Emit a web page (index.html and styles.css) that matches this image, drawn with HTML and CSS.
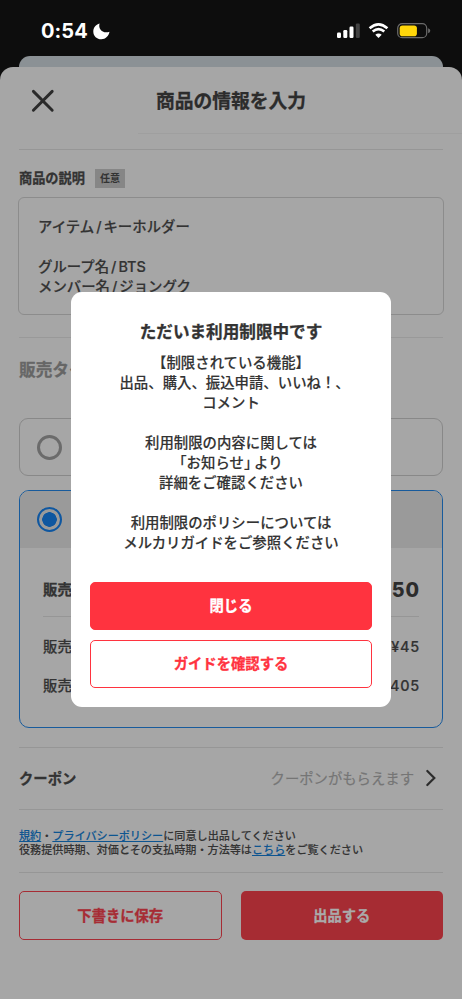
FILE: index.html
```html
<!DOCTYPE html>
<html lang="ja">
<head>
<meta charset="utf-8">
<title>商品の情報を入力</title>
<link rel="stylesheet" href="styles.css">
</head>
<body>
<div class="status">
  <div class="clock"><span>0:54</span>
    <svg width="17" height="17" viewBox="0 0 17 17"><path d="M6.600.5C4.900 5.500 9.500 11.200 16.500 8.800C15.800 13 12.500 16.300 8.400 16.300C3.900 16.300.3 12.900.3 8.400C.3 4.700 2.700 1.600 6.600.5Z" fill="#fff"/></svg>
  </div>
  <svg class="signals" width="96" height="18" viewBox="0 0 96 18">
    <g fill="#fff"><rect x="2" y="10.500" width="4" height="5.500" rx="1.200"/><rect x="8.300" y="8" width="4" height="8" rx="1.200"/><rect x="14.500" y="4.500" width="4" height="11.500" rx="1.200"/></g>
    <rect x="20.800" y="1.500" width="4" height="14.500" rx="1.200" fill="#424242"/>
    <g fill="none" stroke="#fff" stroke-width="2.600"><path d="M34.600 6.200Q43.500 -1.600 52.400 6.200"/><path d="M37.700 9.600Q43.500 4.700 49.300 9.600"/></g>
    <path d="M40.300 12.700Q43.500 10.300 46.700 12.700L43.500 15.900Z" fill="#fff"/>
    <rect x="62.700" y="1.700" width="29" height="14" rx="4.500" fill="none" stroke="#6b6b6b" stroke-width="1.200"/>
    <rect x="64.700" y="3.400" width="17.200" height="10.800" rx="2.800" fill="#ffd60a"/>
    <path d="M93.100 6.200Q95.300 7 95.300 8.700Q95.300 10.400 93.100 11.200Z" fill="#6b6b6b"/>
  </svg>
</div>
<div class="back-sheet"></div>
<main class="sheet">
  <header class="top">
    <svg class="close" width="24" height="24" viewBox="0 0 24 24"><path d="M2.400 2.400L21.200 21.200M21.200 2.400L2.400 21.200" stroke="#2a2a2a" stroke-width="2.900" stroke-linecap="round"/></svg>
    <h1>商品の情報を入力</h1>
  </header>
  <div class="content">
    <section class="description">
      <div class="label"><b>商品の説明</b><span class="tag">任意</span></div>
      <div class="textbox">アイテム<i>/</i>キーホルダー<br><br>グループ名<i>/</i>BTS<br>メンバー名<i>/</i>ジョングク</div>
    </section>
    <section class="type">
      <h2>販売タイプ</h2>
      <div class="option"><span class="radio"></span></div>
      <div class="option-on">
        <div class="option-head"><span class="radio on"></span></div>
        <div class="price"><b>販売価格</b><strong>¥450</strong></div>
        <div class="row"><span>販売手数料</span><span>¥45</span></div>
        <div class="row"><span>販売利益</span><span>¥405</span></div>
      </div>
    </section>
    <section class="coupon"><b>クーポン</b><span>クーポンがもらえます</span>
      <svg width="12" height="18" viewBox="0 0 12 18"><path d="M2.300 2L9.300 9L2.300 16" fill="none" stroke="#2c2c2c" stroke-width="2.200" stroke-linecap="round"/></svg>
    </section>
    <section class="terms"><a>規約</a>・<a>プライバシーポリシー</a>に同意し出品してください<br>役務提供時期、対価とその支払時期・方法等は<a>こちら</a>をご覧ください</section>
    <section class="actions"><div class="btn outline">下書きに保存</div><div class="btn solid">出品する</div></section>
  </div>
</main>
<div class="modal">
  <h3>ただいま利用制限中です</h3>
  <p>【制限されている機能】<br>出品、購入、振込申請、いいね！<span class="half">、</span><br>コメント<br><br>利用制限の内容に関しては<br><span class="half">「</span>お知らせ<span class="half shut">」</span>より<br>詳細をご確認ください<br><br>利用制限のポリシーについては<br>メルカリガイドをご参照ください</p>
  <div class="modal-btn filled">閉じる</div>
  <div class="modal-btn">ガイドを確認する</div>
</div>
</body>
</html>
```
FILE: styles.css
```css
* { box-sizing: border-box; }
body {
  margin: 0; width: 462px; height: 999px; overflow: hidden; position: relative;
  background: #0d0d0d; color: #333;
  font-family: Inter, "Noto Sans CJK JP", sans-serif;
  display: flex; flex-direction: column;
}
h1, h2, h3, p { margin: 0; }
h1, h2, h3, b, .btn, .modal-btn { font-family: "Noto Sans CJK JP", sans-serif; -webkit-text-stroke: .3px; }
svg { flex: none; display: block; }
.status { height: 56px; flex: none; display: flex; justify-content: space-between; padding: 22px 31px 0 41px; }
.clock { display: flex; gap: 5px; height: 18px; align-items: center; color: #fff; font-weight: 700; font-size: 20px; letter-spacing: .1px; }
.back-sheet { height: 24px; flex: none; margin: 0 19px -12px; background: #8b9195; border-radius: 11px 11px 0 0; }
.sheet { flex: 1; background: #a6a6a6; border-radius: 13px 13px 0 0; margin-top: -1px; position: relative; }
.top { height: 67px; display: grid; grid-template-columns: 88px 1fr 88px; align-items: center; background: linear-gradient(#9f9f9f, #9f9f9f) 138px 100% / 324px 1px no-repeat; }
.close { margin-left: 31px; }
h1 { font-size: 18.8px; line-height: 24px; padding-bottom: 2px; text-align: center; color: #2c2c2c; white-space: nowrap; }
.content { padding: 0 19px; }
.description { margin-top: 15px; border-top: 1px solid #969696; height: 188px; padding-top: 18px; }
.label { height: 20px; display: flex; align-items: center; gap: 10px; font-size: 13.2px; line-height: 20px; }
.tag { width: 30px; height: 19px; background: #868686; text-align: center; font-size: 10px; line-height: 18px; font-weight: 700; }
.textbox { height: 118px; margin: 9px -1px 0; border: 1.5px solid #8c8c8c; border-radius: 6px; padding: 19px 19px 0; font-size: 14.4px; line-height: 20px; font-weight: 500; -webkit-text-stroke: .2px; }
.textbox i { font-style: normal; padding: 0 2px; }
.type { border-top: 1px solid #999; height: 410px; }
h2 { font-size: 16.7px; line-height: 24px; margin-top: 19px; color: #666; }
.option { height: 58px; margin-top: 37px; border: 1px solid #888; border-radius: 9px; padding: 16px 17px; }
.radio { display: block; width: 25px; height: 25px; border: 3.500px solid #6b6b6b; border-radius: 50%; }
.radio.on { border: 2px solid #0f57a0; background: radial-gradient(circle, #0f57a0 0 7px, transparent 7.500px); }
.option-on { height: 238px; margin-top: 14px; border: 1.500px solid #185b9c; border-radius: 10px; overflow: hidden; }
.option-head { height: 57px; background: #9a9a9a; padding: 16px 17px; }
.price { height: 69px; margin: 0 23px; border-bottom: 1px solid #969696; display: flex; justify-content: space-between; align-items: center; padding-top: 14px; font-size: 14.4px; }
.price b { padding-bottom: 2px; }
.price strong { font-size: 19.6px; font-weight: 800; color: #2c2c2c; padding-top: 2px; letter-spacing: .8px; margin-right: -.8px; }
.row { height: 39px; margin: 0 23px; display: flex; justify-content: space-between; align-items: center; font-size: 14.4px; font-weight: 500; -webkit-text-stroke: .2px; }
.row span:first-child { padding-bottom: 2px; }
.price + .row { margin-top: 10px; }
.row span:last-child { letter-spacing: .8px; margin-right: -1px; }
.coupon { height: 62px; border-top: 1px solid #969696; display: flex; align-items: center; padding-bottom: 2px; font-size: 14.35px; }
.coupon span { margin-left: auto; color: #757575; -webkit-text-stroke: .2px; }
.coupon svg { margin: 0 6px 0 11px; }
.terms { height: 63px; border-top: 1px solid #969696; padding-top: 19px; font-size: 11.11px; line-height: 14px; font-weight: 500; white-space: nowrap; -webkit-text-stroke: .1px; }
.terms a { color: #0d5591; text-decoration: underline; text-underline-offset: 1px; }
.actions { border-top: 1px solid #969696; padding-top: 18px; display: grid; grid-template-columns: 1fr 1fr; gap: 19px; }
.btn { height: 49px; border-radius: 5px; text-align: center; font-size: 14.3px; font-weight: 700; line-height: 46px; }
.outline { border: 1.500px solid #a62c34; color: #a62c34; }
.solid { background: #a62c33; color: #aaa; line-height: 48px; }
.modal { position: absolute; left: 71px; top: 292px; width: 320px; height: 415px; background: #fff; border-radius: 11px; padding: 27px 19px 0; }
h3 { font-size: 16.6px; line-height: 24px; text-align: center; }
.modal p { margin: 9px 0 30px; font-size: 14.4px; line-height: 20px; font-weight: 500; text-align: center; font-family: "Noto Sans CJK JP", sans-serif; white-space: nowrap; -webkit-text-stroke: .15px; }
.half { font-feature-settings: "halt"; }
.shut { margin-right: 3px; }
.modal-btn { height: 48px; border: 1.500px solid #ff333f; border-radius: 5px; color: #ff333f; text-align: center; font-size: 14.35px; font-weight: 700; line-height: 44px; }
.filled { background: #ff333f; color: #fff; margin-bottom: 10px; }
```
